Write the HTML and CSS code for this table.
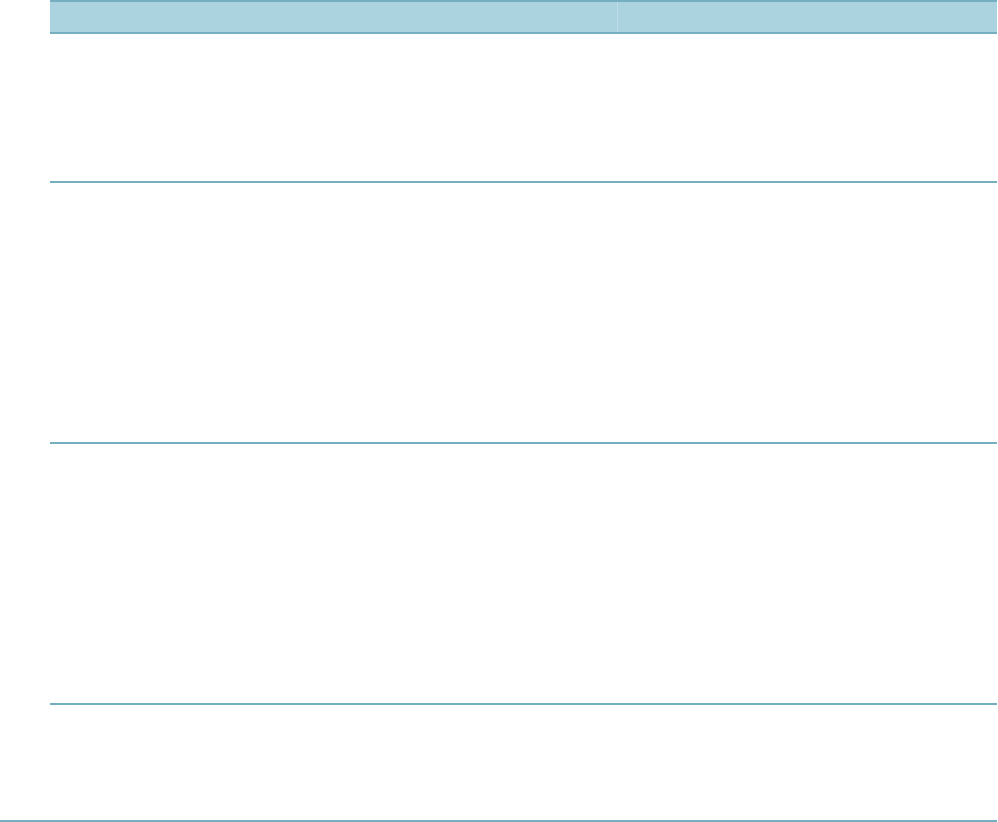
FILE: index.html
```html
<!DOCTYPE html>
<html lang="en">
<head>
<meta charset="utf-8">
<title>Table</title>
<link rel="stylesheet" href="styles.css">
</head>
<body>
<div class="page">
  <div class="grid">
    <div class="row head">
      <div class="cell c1"></div>
      <div class="cell c2"></div>
    </div>
    <div class="row r1">
      <div class="cell c1"></div>
      <div class="cell c2"></div>
    </div>
    <div class="row r2">
      <div class="cell c1"></div>
      <div class="cell c2"></div>
    </div>
    <div class="row r3">
      <div class="cell c1"></div>
      <div class="cell c2"></div>
    </div>
    <div class="row r4">
      <div class="cell c1"></div>
      <div class="cell c2"></div>
    </div>
  </div>
  <div class="foot"></div>
</div>
</body>
</html>
```

FILE: styles.css
```css
html, body {
  margin: 0;
  padding: 0;
  background: #ffffff;
  font-family: "Liberation Sans", Arial, sans-serif;
}
.page {
  width: 998px;
  height: 822px;
  overflow: hidden;
  display: flex;
  flex-direction: column;
}
.grid {
  margin-left: 50px;
  width: 947px;
  display: flex;
  flex-direction: column;
}
.row {
  display: grid;
  grid-template-columns: 568px 379px;
  border-bottom: 2px solid #74aebf;
}
.head {
  height: 30px;
  background: #aad3df;
  border-top: 2px solid #74aebf;
}
.head .c1 {
  border-right: 1px solid #bfdde7;
}
.r1 { height: 147px; }
.r2 { height: 259px; }
.r3 { height: 259px; }
.r4 { height: 115px; border-bottom: none; }
.foot {
  width: 997px;
  border-top: 2px solid #74aebf;
}
```
